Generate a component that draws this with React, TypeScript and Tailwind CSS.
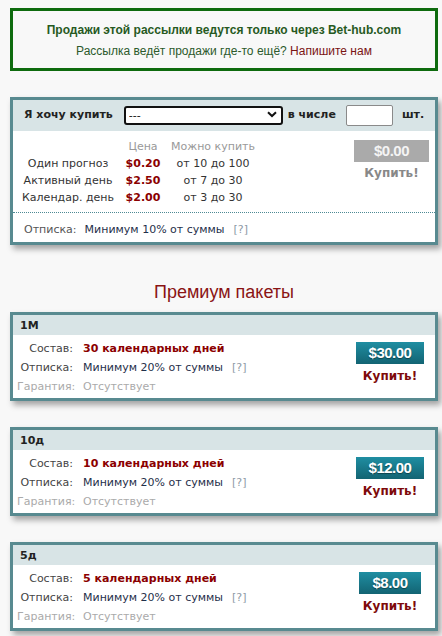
import { useState } from "react";

const PRICES = [
  { name: "Один прогноз", price: "$0.20", range: "от 10 до 100" },
  { name: "Активный день", price: "$2.50", range: "от 7 до 30" },
  { name: "Календар. день", price: "$2.00", range: "от 3 до 30" },
];

const PACKAGES = [
  { title: "1M", content: "30 календарных дней", price: "$30.00" },
  { title: "10д", content: "10 календарных дней", price: "$12.00" },
  { title: "5д", content: "5 календарных дней", price: "$8.00" },
];

const VERDANA = "font-['DejaVu_Sans',Verdana,sans-serif]";
const NARROW = "font-['Liberation_Sans_Narrow','Arial_Narrow','Liberation_Sans',sans-serif]";

function Hint() {
  return <span className="ml-[9px] text-[#8d9aa6]">[?]</span>;
}

function PackageCard({ title, content, price }: { title: string; content: string; price: string }) {
  return (
    <div className="border-[3px] border-[#588a90] bg-white shadow-[3px_4px_6px_rgba(0,0,0,0.35)]">
      <div className="h-[20px] bg-[#d8e4e6] pl-[7px] text-[11px] font-bold leading-[21px] text-[#222]">
        {title}
      </div>
      <div className="flex items-start pb-[2px] pt-[4px] pl-[4px] pr-[5px]">
        <div className="grid flex-1 grid-cols-[56px_1fr] gap-x-[10px] text-[11px] leading-[19px]">
          <div className="text-right text-[#444]">Состав:</div>
          <div className="font-bold text-[#8b0000]">{content}</div>
          <div className="text-right text-[#444]">Отписка:</div>
          <div className="text-[#1f2f4a]">
            Минимум 20% от суммы
            <Hint />
          </div>
          <div className="text-right text-[#aaa]">Гарантия:</div>
          <div className="text-[#aaa]">Отсутствует</div>
        </div>
        <div className="flex w-[80px] flex-col items-center pt-[3px]">
          <button
            className={`h-[22px] bg-gradient-to-b from-[#1f8ea2] to-[#136473] px-[13px] text-[15px] font-bold leading-[22px] tracking-[-0.5px] text-white [text-shadow:0_1px_1px_rgba(0,0,0,0.4)] ${NARROW}`}
          >
            {price}
          </button>
          <div className="mt-[4px] text-[12px] font-bold leading-[16px] text-[#7e0a0a]">Купить!</div>
        </div>
      </div>
    </div>
  );
}

export default function App() {
  const [count, setCount] = useState("");

  return (
    <div className={`h-screen overflow-hidden bg-[#f8f8f8] pl-[10px] pr-[4px] pt-[8px] ${VERDANA}`}>
      <div className="flex h-[63px] flex-col items-center justify-center gap-[6px] border-[3px] border-[#0e6b0e] pt-[3px] font-['Liberation_Sans',Arial,sans-serif] text-[12px] leading-[15px]">
        <div className="font-bold text-[#275a1f]">Продажи этой рассылки ведутся только через Bet-hub.com</div>
        <div className="text-[#2c5a2c]">
          Рассылка ведёт продажи где-то ещё? <span className="text-[#7a1414]">Напишите нам</span>
        </div>
      </div>

      <div className="mt-[26px] border-[3px] border-[#588a90] bg-white shadow-[3px_4px_6px_rgba(0,0,0,0.35)]">
        <div className="flex h-[31px] items-center bg-[#d8e4e6] pl-[11px] text-[11px] font-bold text-[#222]">
          <span>Я хочу купить</span>
          <div className="relative ml-[11px] h-[19px] w-[159px]">
            <select className="h-full w-full appearance-none rounded-[3px] border-2 border-[#111] bg-white pl-[3px] text-[11px] font-normal leading-[15px] text-[#111] outline-none">
              <option>---</option>
            </select>
            <svg
              className="pointer-events-none absolute right-[6px] top-[5px]"
              width="10"
              height="7"
              viewBox="0 0 10 7"
            >
              <path d="M1 1.2 L5 5 L9 1.2" fill="none" stroke="#111" strokeWidth="2" />
            </svg>
          </div>
          <span className="ml-[5px]">в числе</span>
          <input
            value={count}
            onChange={(e) => setCount(e.target.value)}
            className="ml-[10px] h-[21px] w-[47px] rounded-[2px] border border-[#8a8a8a] bg-white px-1 text-[11px] outline-none"
          />
          <span className="ml-[9px]">шт.</span>
        </div>

        <div className="flex items-start pt-[7px] pb-[6px] pr-[6px]">
          <div className="grid flex-1 grid-cols-[110px_40px_100px] text-[11px] leading-[17px] text-[#333]">
            <div />
            <div className="flex justify-center text-[#999]">Цена</div>
            <div className="flex justify-center whitespace-nowrap text-[#999]">Можно купить</div>
            {PRICES.map((p) => (
              <div key={p.name} className="contents">
                <div className="flex justify-center whitespace-nowrap">{p.name}</div>
                <div className="flex justify-center font-bold text-[#8b0000]">{p.price}</div>
                <div className="flex justify-center whitespace-nowrap">{p.range}</div>
              </div>
            ))}
          </div>
          <div className="flex w-[75px] flex-col items-center pt-[2px]">
            <button
              className={`h-[22px] w-[75px] bg-[#aaa] text-[15px] font-bold leading-[22px] tracking-[-0.5px] text-[#f4f4f4] ${NARROW}`}
            >
              $0.00
            </button>
            <div className="mt-[4px] text-[12px] font-bold leading-[14px] text-[#888]">Купить!</div>
          </div>
        </div>

        <div className="border-t border-dotted border-[#4d8a94] pt-[10px] pb-[5px] pl-[11px] text-[11px] leading-[14px]">
          <span className="text-[#555]">Отписка:</span>
          <span className="ml-[8px] text-[#1f2f4a]">Минимум 10% от суммы</span>
          <Hint />
        </div>
      </div>

      <div className="mt-[36px] text-center font-['Liberation_Sans',Arial,sans-serif] text-[18px] leading-[22px] text-[#8a1414]">
        Премиум пакеты
      </div>

      <div className="mt-[9px] flex flex-col gap-[26px]">
        {PACKAGES.map((p) => (
          <PackageCard key={p.title} {...p} />
        ))}
      </div>
    </div>
  );
}
